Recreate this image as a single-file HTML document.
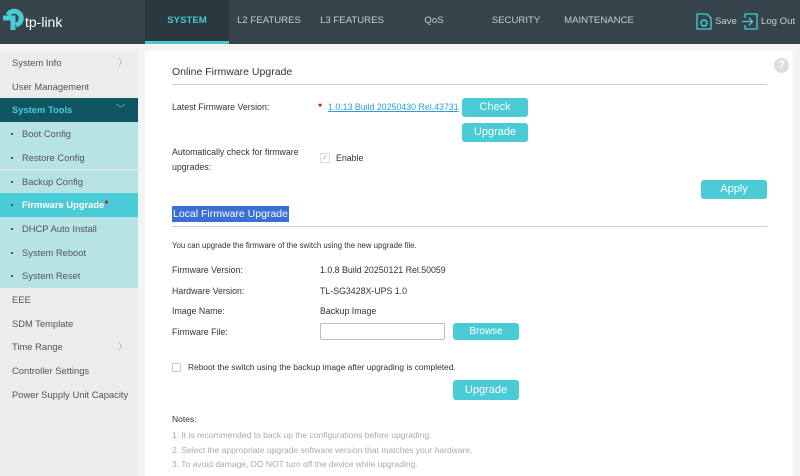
<!DOCTYPE html>
<html><head><meta charset="utf-8"><style>
*{margin:0;padding:0;box-sizing:border-box}
body{width:800px;height:476px;overflow:hidden;background:#f4f4f4;font-family:"Liberation Sans",Arial,sans-serif;position:relative;color:#333}
.hdr{position:absolute;left:0;top:0;width:800px;height:44px;background:#36444c}
.tab{position:absolute;top:0;height:44px;line-height:42px;font-size:9.6px;color:#c8cdd0;text-align:center}
.tab.act{background:#2c383f;color:#4ac7d4;font-weight:bold;border-bottom:3px solid #4ac7d4}
.side{position:absolute;left:0;top:51px;width:138px;height:425px;background:#ececec}
.si{position:absolute;left:0;width:138px;height:23.7px;line-height:23.7px;font-size:9.4px;color:#555;padding-left:12px;white-space:nowrap}
.sub{background:#b8e3e5;padding-left:22px}
.sub:before{content:"";position:absolute;left:11px;top:11px;width:2px;height:2px;background:#555}
.a{position:absolute;font-size:8.8px;color:#333;white-space:nowrap}
.btn{position:absolute;background:#4acbd6;color:#fff;border-radius:3px;text-align:center;font-size:11px}
.note{color:#aaa;font-size:8.5px}
</style></head><body>
<div class="hdr">
<svg style="position:absolute;left:0;top:8px" width="26" height="26" viewBox="0 0 26 26"><path d="M3 10 H13 V22" stroke="#4acbd6" stroke-width="5" fill="none"/><path d="M8 7 A7 7 0 1 1 16 17" stroke="#4acbd6" stroke-width="5" fill="none"/></svg>
<div style="position:absolute;left:25px;top:14px;color:#fff;font-size:14px">tp-link</div>
<div class="tab act" style="left:145px;width:84px">SYSTEM</div>
<div class="tab" style="left:229px;width:80px">L2 FEATURES</div>
<div class="tab" style="left:311px;width:82px">L3 FEATURES</div>
<div class="tab" style="left:400px;width:68px">QoS</div>
<div class="tab" style="left:484px;width:64px">SECURITY</div>
<div class="tab" style="left:560px;width:78px">MAINTENANCE</div>
<svg style="position:absolute;left:696px;top:13px" width="16" height="17" viewBox="0 0 16 17"><path d="M1 1H11L15 5V16H1Z" fill="none" stroke="#4acbd6" stroke-width="1.3"/><circle cx="8" cy="10" r="3" fill="none" stroke="#4acbd6" stroke-width="1.5"/></svg>
<div style="position:absolute;left:715px;top:16px;font-size:9.6px;color:#c8cdd0">Save</div>
<svg style="position:absolute;left:742px;top:13px" width="16" height="17" viewBox="0 0 16 17"><path d="M3 5V1H15V16H3V12" fill="none" stroke="#4acbd6" stroke-width="1.3"/><path d="M0 8.5H10M7 5L10.5 8.5L7 12" fill="none" stroke="#4acbd6" stroke-width="1.3"/></svg>
<div style="position:absolute;left:761px;top:16px;font-size:9.6px;color:#c8cdd0">Log Out</div>
</div>
<div class="side">
<div class="si" style="top:0">System Info<span style="position:absolute;left:118px;color:#aaa">〉</span></div>
<div class="si" style="top:23.7px">User Management</div>
<div class="si" style="top:47.4px;background:#0f5660;color:#4acbd6;font-weight:bold">System Tools<span style="position:absolute;left:116px;top:-1px;font-weight:normal">﹀</span></div>
<div class="si sub" style="top:71.1px">Boot Config</div>
<div class="si sub" style="top:94.8px">Restore Config</div>
<div class="si sub" style="top:118.5px">Backup Config</div>
<div class="si sub" style="top:142.2px;background:#4acbd6;color:#fff;font-weight:bold">Firmware Upgrade<span style="color:#e00;font-size:7px;position:relative;top:-4px">●</span></div>
<div class="si sub" style="top:165.9px">DHCP Auto Install</div>
<div class="si sub" style="top:189.6px">System Reboot</div>
<div class="si sub" style="top:213.3px">System Reset</div>
<div class="si" style="top:237px">EEE</div>
<div class="si" style="top:260.7px">SDM Template</div>
<div class="si" style="top:284.4px">Time Range<span style="position:absolute;left:118px;color:#aaa">〉</span></div>
<div class="si" style="top:308.1px">Controller Settings</div>
<div class="si" style="top:331.8px">Power Supply Unit Capacity</div>
</div>
<div style="position:absolute;left:145px;top:51px;width:648px;height:425px;background:#fff"></div>
<div style="position:absolute;left:774px;top:58px;width:15px;height:15px;border-radius:50%;background:#ddd;color:#fff;font-size:11px;text-align:center;line-height:15px;font-weight:bold">?</div>
<div class="a" style="left:172px;top:66px;font-size:10.5px">Online Firmware Upgrade</div>
<div style="position:absolute;left:172px;top:84px;width:595px;height:1px;background:#ccc"></div>
<div class="a" style="left:172px;top:102px">Latest Firmware Version:</div>
<div class="a" style="left:318px;top:102px;color:#e00;font-size:7px">●</div>
<div class="a" style="left:328px;top:102px;color:#2a9fd8;text-decoration:underline">1.0.13 Build 20250430 Rel.43731</div>
<div class="btn" style="left:462px;top:98px;width:66px;height:19px;line-height:19px">Check</div>
<div class="btn" style="left:462px;top:123px;width:66px;height:19px;line-height:19px">Upgrade</div>
<div class="a" style="left:172px;top:145px;line-height:15px">Automatically check for firmware<br>upgrades:</div>
<div style="position:absolute;left:320px;top:153px;width:10px;height:10px;border:1px solid #ddd;color:#aaa;font-size:8px;line-height:8px;text-align:center">✓</div>
<div class="a" style="left:336px;top:153px">Enable</div>
<div class="btn" style="left:701px;top:180px;width:66px;height:19px;line-height:19px">Apply</div>
<div class="a" style="left:172px;top:206px;height:16px;line-height:16px;padding:0 1px;background:#3a6fd6;color:#fff;font-size:10.5px">Local Firmware Upgrade</div>
<div style="position:absolute;left:172px;top:226px;width:595px;height:1px;background:#ccc"></div>
<div class="a" style="left:172px;top:241px;font-size:7.8px">You can upgrade the firmware of the switch using the new upgrade file.</div>
<div class="a" style="left:172px;top:265px">Firmware Version:</div><div class="a" style="left:320px;top:265px">1.0.8 Build 20250121 Rel.50059</div>
<div class="a" style="left:172px;top:286px">Hardware Version:</div><div class="a" style="left:320px;top:286px">TL-SG3428X-UPS 1.0</div>
<div class="a" style="left:172px;top:306px">Image Name:</div><div class="a" style="left:320px;top:306px">Backup Image</div>
<div class="a" style="left:172px;top:327px">Firmware File:</div>
<div style="position:absolute;left:320px;top:323px;width:125px;height:17px;border:1px solid #bbb;border-radius:2px"></div>
<div class="btn" style="left:453px;top:323px;width:66px;height:17px;line-height:17px;font-size:10px">Browse</div>
<div style="position:absolute;left:172px;top:363px;width:9px;height:9px;border:1px solid #ccc"></div>
<div class="a" style="left:188px;top:362px;font-size:8.4px">Reboot the switch using the backup image after upgrading is completed.</div>
<div class="btn" style="left:453px;top:380px;width:66px;height:20px;line-height:20px">Upgrade</div>
<div class="a" style="left:172px;top:414px;font-size:8.5px">Notes:</div>
<div class="a note" style="left:172px;top:430px">1. It is recommended to back up the configurations before upgrading.</div>
<div class="a note" style="left:172px;top:445px">2. Select the appropriate upgrade software version that matches your hardware.</div>
<div class="a note" style="left:172px;top:459px">3. To avoid damage, DO NOT turn off the device while upgrading.</div>
</body></html>
